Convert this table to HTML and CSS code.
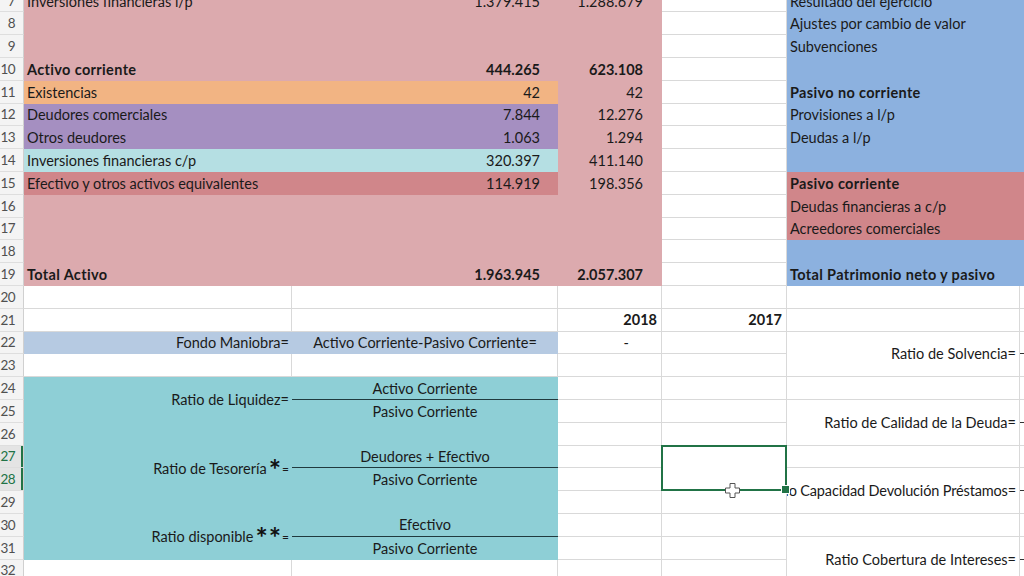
FILE: index.html
```html
<!DOCTYPE html>
<html lang="es">
<head>
<meta charset="utf-8">
<title>Balance y ratios</title>
<link rel="stylesheet" href="styles.css">
</head>
<body>
<div class="sheet">
  <!-- row 7 -->
  <div class="cell h">7</div>
  <div class="cell span2 pink ab"><span>Inversiones financieras l/p</span><span>1.379.415</span></div>
  <div class="cell pink cv">1.288.679</div>
  <div class="cell w"></div>
  <div class="cell span2 blue">Resultado del ejercicio</div>
  <!-- row 8 -->
  <div class="cell h">8</div>
  <div class="cell span2 pink"></div>
  <div class="cell pink"></div>
  <div class="cell w"></div>
  <div class="cell span2 blue">Ajustes por cambio de valor</div>
  <!-- row 9 -->
  <div class="cell h">9</div>
  <div class="cell span2 pink"></div>
  <div class="cell pink"></div>
  <div class="cell w"></div>
  <div class="cell span2 blue">Subvenciones</div>
  <!-- row 10 -->
  <div class="cell h">10</div>
  <div class="cell span2 pink ab b"><span class="lb">Activo corriente</span><span>444.265</span></div>
  <div class="cell pink cv b">623.108</div>
  <div class="cell w"></div>
  <div class="cell span2 blue"></div>
  <!-- row 11 -->
  <div class="cell h">11</div>
  <div class="cell span2 orange ab"><span>Existencias</span><span>42</span></div>
  <div class="cell pink cv">42</div>
  <div class="cell w"></div>
  <div class="cell span2 blue b lb">Pasivo no corriente</div>
  <!-- row 12 -->
  <div class="cell h">12</div>
  <div class="cell span2 purple ab"><span>Deudores comerciales</span><span>7.844</span></div>
  <div class="cell pink cv">12.276</div>
  <div class="cell w"></div>
  <div class="cell span2 blue">Provisiones a l/p</div>
  <!-- row 13 -->
  <div class="cell h">13</div>
  <div class="cell span2 purple ab"><span>Otros deudores</span><span>1.063</span></div>
  <div class="cell pink cv">1.294</div>
  <div class="cell w"></div>
  <div class="cell span2 blue">Deudas a l/p</div>
  <!-- row 14 -->
  <div class="cell h">14</div>
  <div class="cell span2 cyan ab"><span>Inversiones financieras c/p</span><span>320.397</span></div>
  <div class="cell pink cv">411.140</div>
  <div class="cell w"></div>
  <div class="cell span2 blue"></div>
  <!-- row 15 -->
  <div class="cell h">15</div>
  <div class="cell span2 red ab"><span>Efectivo y otros activos equivalentes</span><span>114.919</span></div>
  <div class="cell pink cv">198.356</div>
  <div class="cell w"></div>
  <div class="cell span2 red b lb">Pasivo corriente</div>
  <!-- row 16 -->
  <div class="cell h">16</div>
  <div class="cell span2 pink"></div>
  <div class="cell pink"></div>
  <div class="cell w"></div>
  <div class="cell span2 red">Deudas financieras a c/p</div>
  <!-- row 17 -->
  <div class="cell h">17</div>
  <div class="cell span2 pink"></div>
  <div class="cell pink"></div>
  <div class="cell w"></div>
  <div class="cell span2 red">Acreedores comerciales</div>
  <!-- row 18 -->
  <div class="cell h">18</div>
  <div class="cell span2 pink"></div>
  <div class="cell pink"></div>
  <div class="cell w"></div>
  <div class="cell span2 blue"></div>
  <!-- row 19 -->
  <div class="cell h">19</div>
  <div class="cell span2 pink ab b"><span class="lb">Total Activo</span><span>1.963.945</span></div>
  <div class="cell pink cv b">2.057.307</div>
  <div class="cell w"></div>
  <div class="cell span2 blue b lb">Total Patrimonio neto y pasivo</div>

  <!-- row 20 -->
  <div class="cell h">20</div>
  <div class="cell w"></div><div class="cell w"></div><div class="cell w"></div><div class="cell w"></div><div class="cell w"></div><div class="cell w"></div>
  <!-- row 21 -->
  <div class="cell h">21</div>
  <div class="cell w"></div><div class="cell w"></div>
  <div class="cell w r b yr">2018</div>
  <div class="cell w r b yr">2017</div>
  <div class="cell w"></div><div class="cell w"></div>
  <!-- row 22 -->
  <div class="cell h">22</div>
  <div class="cell lblue r">Fondo Maniobra=</div>
  <div class="cell lblue ctr">Activo Corriente-Pasivo Corriente=</div>
  <div class="cell w r dash">-</div>
  <div class="cell w"></div>
  <div class="cell w row2 r">Ratio de Solvencia=</div>
  <div class="cell w fl"></div>
  <!-- row 23 -->
  <div class="cell h">23</div>
  <div class="cell w"></div><div class="cell w"></div><div class="cell w"></div><div class="cell w"></div>
  <div class="cell w"></div>
  <!-- row 24 -->
  <div class="cell h">24</div>
  <div class="cell teal row2 r">Ratio de Liquidez=</div>
  <div class="cell teal ctr num">Activo Corriente</div>
  <div class="cell w"></div><div class="cell w"></div><div class="cell w"></div><div class="cell w"></div>
  <!-- row 25 -->
  <div class="cell h">25</div>
  <div class="cell teal ctr">Pasivo Corriente</div>
  <div class="cell w"></div><div class="cell w"></div>
  <div class="cell w row2 r">Ratio de Calidad de la Deuda=</div>
  <div class="cell w fl"></div>
  <!-- row 26 -->
  <div class="cell h">26</div>
  <div class="cell teal"></div><div class="cell teal"></div>
  <div class="cell w"></div><div class="cell w"></div>
  <div class="cell w"></div>
  <!-- row 27 -->
  <div class="cell h hsel">27</div>
  <div class="cell teal row2 r">Ratio de Tesorería<span class="star">*</span><span class="eq">=</span></div>
  <div class="cell teal ctr num">Deudores + Efectivo</div>
  <div class="cell w"></div>
  <div class="cell w row2 sel">
    <svg class="cursor" width="17" height="17" viewBox="0 0 17 17"><path d="M6 1.5h5v4.5h4.5v5H11v4.5H6V11H1.5V6H6z" fill="#fff" stroke="#555" stroke-width="1"/></svg>
  </div>
  <div class="cell w"></div><div class="cell w"></div>
  <!-- row 28 -->
  <div class="cell h hsel">28</div>
  <div class="cell teal ctr">Pasivo Corriente</div>
  <div class="cell w"></div>
  <div class="cell w row2 r cap">Ratio Capacidad Devolución Préstamos=</div>
  <div class="cell w fl"></div>
  <!-- row 29 -->
  <div class="cell h">29</div>
  <div class="cell teal"></div><div class="cell teal"></div>
  <div class="cell w"></div><div class="cell w"></div>
  <div class="cell w"></div>
  <!-- row 30 -->
  <div class="cell h">30</div>
  <div class="cell teal row2 r">Ratio disponible<span class="star">**</span><span class="eq">=</span></div>
  <div class="cell teal ctr num">Efectivo</div>
  <div class="cell w"></div><div class="cell w"></div><div class="cell w"></div><div class="cell w"></div>
  <!-- row 31 -->
  <div class="cell h">31</div>
  <div class="cell teal ctr">Pasivo Corriente</div>
  <div class="cell w"></div><div class="cell w"></div>
  <div class="cell w row2 r">Ratio Cobertura de Intereses=</div>
  <div class="cell w fl"></div>
  <!-- row 32 -->
  <div class="cell h">32</div>
  <div class="cell w"></div><div class="cell w"></div><div class="cell w"></div><div class="cell w"></div>
  <div class="cell w"></div>
</div>
</body>
</html>
```

FILE: styles.css
```css
* { box-sizing: border-box; }
html, body {
  margin: 0;
  height: 576px;
  overflow: hidden;
  background: #ffffff;
}
body {
  font-family: Lato, "Noto Sans", sans-serif;
  font-size: 14.5px;
  color: #1a1a1a;
}
.sheet {
  display: grid;
  grid-template-columns: 24px 268px 266px 104px 125px 233px 1fr;
  grid-auto-rows: 22.8px;
  margin-top: -10.4px;
}
.cell {
  display: flex;
  align-items: center;
  padding: 0 3px;
  white-space: nowrap;
  overflow: hidden;
  min-width: 0;
}
.w {
  border-right: 1px solid #d9d9d9;
  border-bottom: 1px solid #d9d9d9;
  background: #ffffff;
}
.h {
  background: #f4f4f4;
  border-bottom: 1px solid #dedede;
  border-right: 1px solid #d0d0d0;
  justify-content: flex-end;
  padding: 0 8px 0 0;
  color: #505050;
  font-size: 13.5px;
  letter-spacing: -0.6px;
}
.hsel {
  color: #217346;
  background: #e4e4e4;
  box-shadow: inset -2px 0 0 #217346;
}
.span2 { grid-column: span 2; }
.row2 { grid-row: span 2; }
.r { justify-content: flex-end; }
.ctr { justify-content: center; }
.b { font-weight: 700; }
.lb { letter-spacing: 0.35px; }
.ab { justify-content: space-between; padding-right: 18px; }
.cv { justify-content: flex-end; padding-right: 19px; }
.yr { padding-right: 4px; }
.dash { padding-right: 32px; }
.cap { letter-spacing: -0.15px; }

.pink { background: #dcaaae; }
.orange { background: #f2b483; }
.purple { background: #a58fc1; }
.cyan { background: #b5dfe3; }
.red { background: #d0868a; }
.blue { background: #8cb1df; }
.lblue { background: #b6cae2; }
.teal { background: #8ecfd6; }

.num { border-bottom: 1.5px solid #203a3e; }
.fl { border-bottom: 1.5px solid #333333; }

.star {
  font-weight: 700;
  font-size: 29px;
  line-height: 1;
  margin-left: 2px;
  letter-spacing: 1px;
  vertical-align: -6px;
  color: #111111;
}
.eq {
  font-size: 12px;
  margin-left: 0;
}

.sel {
  position: relative;
  overflow: visible;
}
.sel::before {
  content: "";
  position: absolute;
  left: -1px;
  top: -1px;
  right: -1px;
  bottom: -1px;
  border: 2px solid #217346;
  z-index: 2;
}
.sel::after {
  content: "";
  position: absolute;
  right: -4px;
  bottom: -4px;
  width: 7px;
  height: 7px;
  background: #217346;
  border: 1px solid #ffffff;
  z-index: 4;
}
.cursor {
  position: absolute;
  left: 62px;
  top: 36px;
  z-index: 5;
}
```
